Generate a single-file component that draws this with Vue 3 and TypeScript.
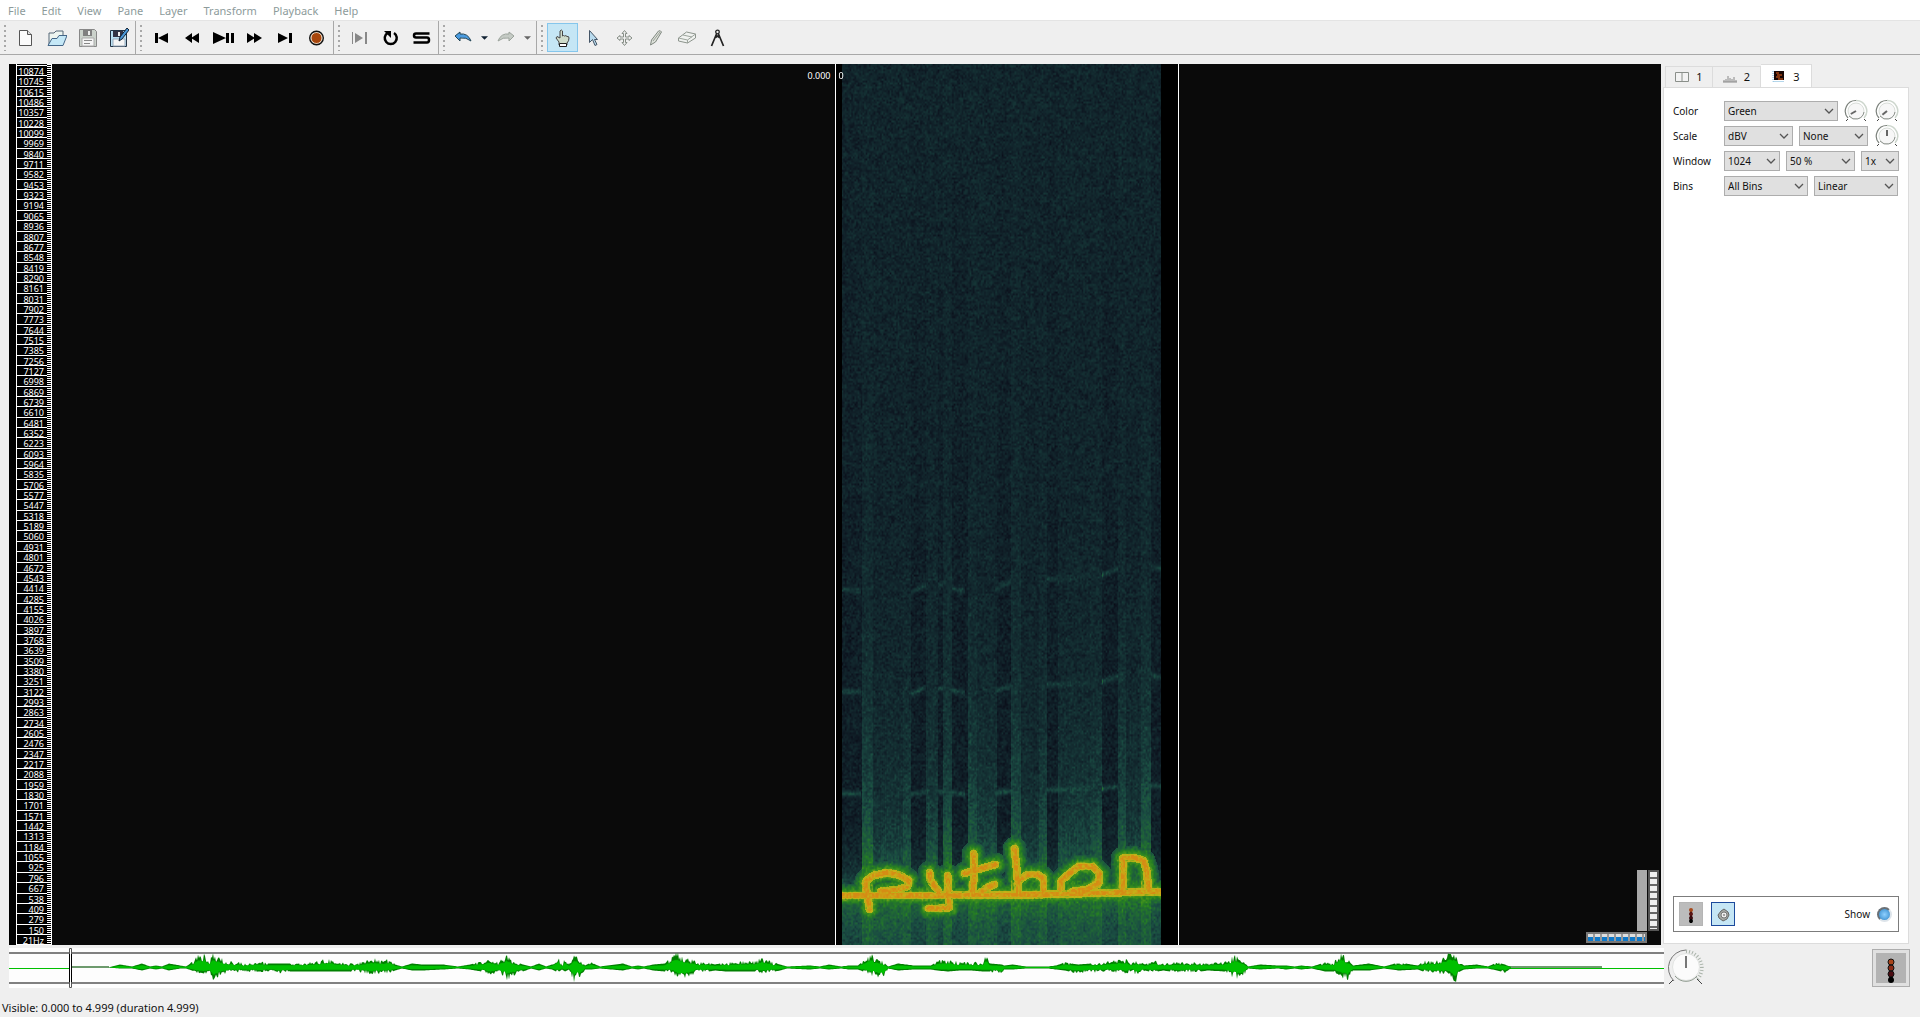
<script setup lang="ts">
import { onMounted, ref } from 'vue'

const menus = ['File', 'Edit', 'View', 'Pane', 'Layer', 'Transform', 'Playback', 'Help']

// Frequency scale: every sixth FFT bin, highest first.
const BIN_HZ = 22050 / 1024
const frequencies: string[] = Array.from({ length: 85 }, (_, i) => {
  const hz = Math.floor(BIN_HZ * (1 + 6 * (84 - i)))
  return i === 84 ? `${hz}Hz` : String(hz)
})

interface Choice { label: string; options: string[]; size: string }
interface SettingRow { name: string; choices: Choice[]; dials: number[] }
const settings: SettingRow[] = [
  { name: 'Color', choices: [{ label: 'Color', options: ['Green', 'Sunset', 'Ice'], size: 'w-xl' }], dials: [240, 230] },
  { name: 'Scale', choices: [
    { label: 'Scale', options: ['dBV', 'Linear', 'Meter'], size: 'w-md' },
    { label: 'Normalization', options: ['None', 'Column', 'Visible'], size: 'w-md' },
  ], dials: [0] },
  { name: 'Window', choices: [
    { label: 'Window size', options: ['1024', '2048', '4096'], size: 'w-sm' },
    { label: 'Window overlap', options: ['50 %', '75 %'], size: 'w-md' },
    { label: 'Oversampling', options: ['1x', '2x'], size: 'w-xs' },
  ], dials: [] },
  { name: 'Bins', choices: [
    { label: 'Bins', options: ['All Bins', 'Peak Bins'], size: 'w-lg' },
    { label: 'Bin scale', options: ['Linear', 'Log'], size: 'w-lg' },
  ], dials: [] },
]

function makeRandom(seed: number): () => number {
  let s = seed
  return () => {
    s = (s + 0x6d2b79f5) | 0
    let t = Math.imul(s ^ (s >>> 15), 1 | s)
    t = (t + Math.imul(t ^ (t >>> 7), 61 | t)) ^ t
    return ((t ^ (t >>> 14)) >>> 0) / 4294967296
  }
}

// Overview envelope: [x, peak above, peak below]
const envelope: [number, number, number][] = [
  [99, 0, 0], [111, 3, 1], [123, 1, 1], [133, 4, 3], [141, 1, 1], [147, 2, 2], [153, 1, 1], [160, 4, 3], [171, 2, 1],
  [177, 1, 1], [183, 5, 3], [188, 12, 6], [194, 14, 6], [201, 8, 6], [205, 14, 14], [211, 9, 8], [221, 6, 5], [236, 4, 4],
  [247, 6, 5], [259, 4, 4], [273, 4, 6], [281, 4, 4], [296, 5, 4], [309, 6, 4], [319, 9, 4], [331, 5, 4], [341, 4, 4],
  [353, 5, 5], [363, 9, 7], [375, 6, 6], [381, 9, 5], [386, 3, 3], [393, 1, 1], [403, 4, 3], [413, 3, 3], [434, 3, 2],
  [449, 1, 1], [461, 3, 2], [472, 6, 4], [481, 9, 8], [489, 5, 5], [498, 12, 12], [505, 6, 8], [514, 3, 4], [522, 1, 1],
  [530, 4, 3], [537, 1, 1], [543, 3, 2], [549, 11, 5], [553, 2, 2], [556, 9, 4], [560, 3, 2], [565, 11, 15], [572, 7, 10],
  [576, 2, 2], [582, 5, 2], [591, 1, 1], [614, 4, 3], [623, 1, 1], [629, 2, 2], [635, 1, 1], [644, 3, 3], [656, 4, 4],
  [664, 12, 5], [671, 14, 14], [677, 9, 12], [687, 6, 5], [694, 6, 5], [706, 3, 3], [717, 5, 4], [736, 6, 4], [746, 6, 4],
  [754, 10, 6], [761, 6, 5], [771, 3, 3], [778, 1, 1], [801, 2, 2], [811, 1, 1], [820, 3, 2], [832, 1, 1], [840, 2, 2],
  [849, 2, 2], [857, 9, 5], [861, 14, 8], [868, 8, 9], [874, 6, 14], [879, 1, 1], [889, 4, 3], [905, 2, 2], [922, 2, 2],
  [928, 6, 3], [939, 8, 4], [951, 5, 3], [962, 5, 3], [974, 5, 4], [977, 12, 4], [981, 4, 4], [993, 3, 8], [995, 2, 2],
  [1004, 3, 2], [1017, 1, 1], [1039, 1, 1], [1047, 2, 2], [1056, 5, 3], [1069, 3, 6], [1095, 5, 4], [1106, 7, 5],
  [1117, 8, 6], [1123, 4, 3], [1128, 7, 9], [1136, 3, 3], [1144, 7, 5], [1154, 4, 3], [1169, 5, 5], [1184, 5, 5],
  [1199, 4, 3], [1216, 6, 4], [1226, 12, 11], [1233, 8, 12], [1239, 1, 1], [1251, 3, 2], [1269, 2, 1], [1277, 2, 2],
  [1286, 1, 1], [1292, 2, 2], [1303, 1, 1], [1316, 5, 4], [1325, 5, 4], [1331, 15, 8], [1338, 9, 13], [1344, 2, 3],
  [1360, 4, 3], [1375, 1, 1], [1390, 5, 3], [1409, 2, 2], [1414, 6, 4], [1429, 7, 7], [1440, 13, 6], [1446, 14, 16],
  [1451, 5, 4], [1455, 2, 2], [1468, 3, 1], [1479, 1, 1], [1488, 5, 3], [1496, 3, 5], [1503, 0, 0],
]

function wavePath(scale: number, rough: number): string {
  const rnd = makeRandom(7)
  const top: string[] = []
  const bottom: string[] = []
  for (let i = 0; i < envelope.length - 1; i++) {
    const [x0, u0, d0] = envelope[i]
    const [x1, u1, d1] = envelope[i + 1]
    for (let x = x0; x < x1; x++) {
      const t = (x - x0) / (x1 - x0)
      const up = u0 + (u1 - u0) * t
      const down = d0 + (d1 - d0) * t
      const r = up > 4 ? 1.15 - rnd() * rough : 1
      const q = down > 4 ? 1.1 - rnd() * rough : 1
      top.push(`${x} ${(19.5 - Math.min(15, up * r) * scale).toFixed(1)}`)
      bottom.unshift(`${x} ${(19.5 + Math.min(15, down * q) * scale).toFixed(1)}`)
    }
  }
  return `M${top.join('L')}L${bottom.join('L')}Z`
}
const wavePeak = wavePath(1, 0.75)
const waveMean = wavePath(0.55, 0.4)

// Spectrogram
const SPEC_W = 319
const SPEC_H = 881
const canvas = ref<HTMLCanvasElement | null>(null)

type Pt = [number, number]
type Rgb = [number, number, number]
const traces: Pt[][] = [
  [[0, 831], [100, 831], [200, 830], [319, 827]],
  [[23, 824], [24, 816], [31, 811], [45, 808], [58, 811], [66, 816], [65, 822], [56, 825], [38, 827]],
  [[23, 820], [25, 831], [27, 845]],
  [[87, 808], [88, 816], [96, 827]],
  [[105, 811], [106, 826], [107, 843], [97, 844], [86, 844]],
  [[131, 789], [132, 806], [130, 828]],
  [[122, 809], [135, 805], [153, 800]],
  [[138, 828], [145, 823], [152, 820]],
  [[172, 784], [174, 803], [176, 828]],
  [[176, 816], [185, 810], [195, 810], [201, 814], [201, 826]],
  [[218, 826], [219, 816], [228, 808], [236, 802], [250, 802], [257, 809], [256, 819], [245, 825], [230, 827]],
  [[280, 828], [281, 811], [280, 794], [291, 793], [301, 796], [304, 806], [306, 824]],
]

// Columns with leakage: [from, to, strength]
const bands: [number, number, number][] = [
  [20, 31, 1], [31, 61, 0.5], [61, 69, 0.75], [84, 96, 0.72], [101, 110, 0.95], [126, 135, 0.95], [135, 155, 0.62],
  [169, 179, 1], [179, 197, 0.45], [197, 205, 0.8], [216, 248, 0.6], [248, 260, 0.76], [276, 284, 0.95], [284, 300, 0.5],
  [299, 309, 1],
]
const overtone: [number, number, number, number][] = [
  [0, 18, 0, 1], [68, 86, 2, -4], [96, 101, -3, -3], [110, 122, -1, 1], [153, 170, 0, -6], [203, 228, -7, -8],
  [228, 260, -8, -10], [260, 276, -10, -15], [309, 319, -16, -14],
]

const stops: [number, number, number][] = [
  [3, 4, 9], [12, 19, 30], [17, 36, 43], [21, 53, 54], [26, 76, 66], [31, 99, 56],
  [38, 127, 34], [74, 150, 28], [176, 176, 24], [200, 176, 24], [213, 140, 20],
]

function colour(v: number): Rgb {
  const c = Math.max(0, Math.min(0.999, v)) * 10
  const i = Math.floor(c)
  const f = c - i
  const a = stops[i]
  const b = stops[i + 1]
  return [a[0] + (b[0] - a[0]) * f, a[1] + (b[1] - a[1]) * f, a[2] + (b[2] - a[2]) * f]
}

function distance(px: number, py: number, a: Pt, b: Pt): number {
  const dx = b[0] - a[0]
  const dy = b[1] - a[1]
  const t = Math.max(0, Math.min(1, ((px - a[0]) * dx + (py - a[1]) * dy) / (dx * dx + dy * dy)))
  return Math.hypot(px - a[0] - t * dx, py - a[1] - t * dy)
}

onMounted(() => {
  const ctx = canvas.value?.getContext('2d')
  if (!ctx) return
  const rnd = makeRandom(1024)
  const stepX = 1.6
  const stepY = 1.9
  const stride = Math.ceil(SPEC_W / stepX) + 2
  const noise = new Float32Array(stride * (Math.ceil(SPEC_H / stepY) + 2))
  for (let i = 0; i < noise.length; i++) noise[i] = rnd() + rnd() - 1
  const column = Array.from({ length: SPEC_W }, () => rnd() - 0.5)
  const img = ctx.createImageData(SPEC_W, SPEC_H)

  for (let x = 0; x < SPEC_W; x++) {
    let band = 0
    for (const [from, to, s] of bands) if (x >= from && x < to) band = Math.max(band, s)
    if (band) band += column[x] * 0.14
    const gx = Math.floor(x / stepX)
    const fx = x / stepX - gx
    for (let y = 0; y < SPEC_H; y++) {
      const above = 831 - x / 90 - y
      const gy = Math.floor(y / stepY)
      const fy = y / stepY - gy
      const k = gy * stride + gx
      const upper = noise[k] * (1 - fx) + noise[k + 1] * fx
      const lower = noise[k + stride] * (1 - fx) + noise[k + stride + 1] * fx
      const grain = upper * (1 - fy) + lower * fy
      let v = 0.2 - 0.035 * Math.min(1, y / 600)
      if (above > 0) {
        v += band * (0.24 * Math.exp(-above / 150) + 0.08 * Math.exp(-above / 400) + 0.16 * Math.exp(-above / 45))
        v += 0.38 * Math.exp(-above / 20) * (1 - band * 0.5)
      } else {
        v += 0.2 + band * 0.1 + 0.24 * Math.exp(above / 16)
      }
      if (band < 0.7) {
        for (let h = 0; h < 4; h++) {
          const spread = [0.5, 1, 1.45, 1.8][h]
          const gain = [0.19, 0.17, 0.14, 0.04][h] * (band ? 0.4 : 1)
          for (const [x0, x1, d0, d1] of overtone) {
            if (x < x0 || x > x1) continue
            const yy = 729 - h * 102 + (d0 + ((d1 - d0) * (x - x0)) / (x1 - x0)) * spread
            v += gain * Math.exp(-(((y - yy) / 3) ** 2))
          }
        }
      }
      v += grain * 0.12
      if (y > 760) {
        let d = 99
        for (const t of traces) for (let i = 1; i < t.length; i++) d = Math.min(d, distance(x, y, t[i - 1], t[i]))
        if (d < 4) v = (d < 2.2 ? 0.97 : 0.84) + grain * 0.12
        else if (d < 12) v = Math.max(v, 0.7 - (d - 4) * 0.035 + grain * 0.1)
      }
      const [r, g, b] = colour(v)
      const o = (y * SPEC_W + x) * 4
      img.data[o] = r
      img.data[o + 1] = g
      img.data[o + 2] = b
      img.data[o + 3] = 255
    }
  }
  ctx.putImageData(img, 0, 0)
})
</script>

<template>
  <div class="app">
    <nav class="menubar">
      <a v-for="m in menus" :key="m" href="#">{{ m }}</a>
    </nav>

    <header class="toolbar">
      <div class="group">
        <i class="grip"></i>
        <button aria-label="New">
          <svg viewBox="0 0 20 20"><path d="M3.500 2.500h8l4 4v11h-12z" fill="#fbfbfb" stroke="#555" /><path d="M11.500 2.500v4h4" fill="#ddd" stroke="#555" /></svg>
        </button>
        <button aria-label="Open">
          <svg viewBox="0 0 20 20"><path d="M2 17V5h5l2-2h7v5" fill="#eef5f0" stroke="#567" /><path d="M1 17.500l4-7h5l2-3h8l-4 10z" fill="#c5e8f7" stroke="#468" /></svg>
        </button>
        <button aria-label="Save">
          <svg viewBox="0 0 20 20"><path d="M1.500 1.500h15l2 2v15h-17z" fill="#cbd2cb" stroke="#888" /><path d="M5 2h9v6H5z" fill="#808080" /><path d="M10 3h2v4h-2z" fill="#eee" /><path d="M4 10h12v8H4z" fill="#f5f5f5" stroke="#aaa" /><path d="M6 12.500h8M6 15.500h6" stroke="#888" /></svg>
        </button>
        <button aria-label="Save As">
          <svg viewBox="0 0 20 20"><path d="M1.500 2.500h16v16h-16z" fill="#b9dff2" stroke="#234" /><path d="M4 3h10v6H4z" fill="#334" /><path d="M9 4h2v4H9z" fill="#eee" /><path d="M4 11h12v7H4z" fill="#f5f5f5" stroke="#9ab" /><path d="M10 13l1-4 7-9 2 2-7 9z" fill="#4a97d8" stroke="#123" /></svg>
        </button>
      </div>
      <div class="group">
        <i class="grip"></i>
        <button aria-label="Rewind to Start"><svg viewBox="0 0 20 20"><path d="M3 5h3v10H3zM16 5v10L6 10z" /></svg></button>
        <button aria-label="Rewind"><svg viewBox="0 0 20 20"><path d="M9 5v10l-7-5zM16 5v10l-8-5z" /></svg></button>
        <button aria-label="Play or Pause"><svg class="wide" viewBox="0 0 24 20"><path d="M1 4l13 6-13 6zM14 5h3v10h-3zM19 5h3v10h-3z" /></svg></button>
        <button aria-label="Fast Forward"><svg viewBox="0 0 20 20"><path d="M2 5v10l8-5zM9 5v10l8-5z" /></svg></button>
        <button aria-label="Fast Forward to End"><svg viewBox="0 0 20 20"><path d="M2 5v10l10-5zM13 5h3v10h-3z" /></svg></button>
        <button aria-label="Record"><svg viewBox="0 0 20 20"><circle cx="9.500" cy="10" r="5.500" fill="#a8460c" stroke="#f3dcc4" /><circle cx="9.500" cy="10" r="6.800" fill="none" stroke="#111" stroke-width="1.400" /></svg></button>
      </div>
      <div class="group">
        <i class="grip"></i>
        <button aria-label="Play Selection"><svg viewBox="0 0 20 20" fill="#888"><path d="M2 4h1v12H2zM15 4h2v12h-2zM5 5l8 5-8 5z" /></svg></button>
        <button aria-label="Loop"><svg viewBox="0 0 20 20"><path d="M13 5A6 6 0 1 1 6.500 5" fill="none" stroke="#000" stroke-width="2.500" /><path d="M3 3h7v7z" /></svg></button>
        <button aria-label="Solo"><svg viewBox="0 0 20 20"><path d="M17.500 5.500H4q-2 0-2 2t2 2h11q2 0 2 2.500t-2 2.500H1.500" fill="none" stroke="#000" stroke-width="2.500" /></svg></button>
      </div>
      <div class="group">
        <i class="grip"></i>
        <button class="split" aria-label="Undo">
          <svg viewBox="0 0 20 20"><path d="M2 8l5-4v2q8-1 11 7-5-4-11-3v3z" fill="#4a9be0" stroke="#245" /></svg>
          <svg class="caret" viewBox="0 0 8 4"><path d="M0 0h8L4 4z" fill="#123" /></svg>
        </button>
        <button class="split" aria-label="Redo">
          <svg viewBox="0 0 20 20"><path d="M18 8l-5-4v2Q5 5 2 13q5-4 11-3v3z" fill="#c4cac4" stroke="#9ba39b" /></svg>
          <svg class="caret" viewBox="0 0 8 4"><path d="M0 0h8L4 4z" fill="#666" /></svg>
        </button>
      </div>
      <div class="group last">
        <i class="grip"></i>
        <button class="on" aria-label="Navigate"><svg viewBox="0 0 20 20"><path d="M6 17v-3l-3-4 1-1.500 3 1.500V3q1.500-2 2.500 0v5q1-1 2 0 1.500-1 2.500.500 2-.500 2 1.500 0 3-2 5v2z" fill="#cfdccb" stroke="#444" /><path d="M6.500 15.500h7v3h-7z" fill="#fff" stroke="#222" /></svg></button>
        <button aria-label="Select"><svg viewBox="0 0 20 20"><path d="M5.500 2.500v12l3-3 2.500 6 2-1-2.500-5h3z" fill="#b9dbee" stroke="#456" /></svg></button>
        <button aria-label="Move"><svg viewBox="0 0 20 20"><path d="M9.500 2.500l2.500 3h-1.500V9H14V7.500l3 2.500-3 2.500V11h-3.500v3.500H12l-2.500 3-2.500-3h1.500V11H5v1.500L2 10l3-2.500V9h3.500V5.500H7z" fill="#eee" stroke="#858d85" /></svg></button>
        <button aria-label="Draw"><svg viewBox="0 0 20 20"><path d="M4.500 17l1-5 7-9q2-1 3 1l-6 10z" fill="#dde1da" stroke="#808880" /><path d="M7 13l7-9" stroke="#9a9f98" /></svg></button>
        <button aria-label="Erase"><svg viewBox="0 0 20 20"><path d="M1.500 10l8-6 9 2v4l-8 5-9-2z" fill="#f0f2f0" stroke="#8d958d" /><path d="M1.500 10l9 2 8-6M10.500 12v3M6 7l9 2" fill="none" stroke="#9da59d" /></svg></button>
        <button aria-label="Measure"><svg viewBox="0 0 20 20"><circle cx="9.500" cy="4" r="1.800" fill="none" stroke="#222" stroke-width="1.300" /><path d="M8.500 6L3.500 18M10.500 6l5 12M7.500 9.500l2-1.500 2 1.500" fill="none" stroke="#222" stroke-width="1.700" /></svg></button>
      </div>
    </header>

    <main class="body">
      <section class="pane">
        <div class="before">
          <div class="ruler">
            <div class="labels">
              <span v-for="f in frequencies" :key="f">{{ f }}</span>
            </div>
            <div class="ticks"></div>
          </div>
          <span class="time">0.000</span>
        </div>
        <div class="after">
          <div class="clip">
            <canvas ref="canvas" class="spectrum" :width="SPEC_W" :height="SPEC_H"></canvas>
            <span class="frame">0</span>
          </div>
        </div>
        <div class="wheels">
          <i class="vscroll"></i>
          <i class="vwheel"></i>
          <i class="hwheel"></i>
        </div>
      </section>

      <aside class="side">
        <div class="tabs" role="tablist">
          <button role="tab"><svg viewBox="0 0 14 11"><path d="M.500.500h13v9H.500zM7 .500v9" fill="#f3f3f3" stroke="#8a8f8a" /></svg>1</button>
          <button role="tab"><svg viewBox="0 0 14 11"><path d="M1 10V8M3 10V7M5 10V4M7 10V6M9 10V7M11 10V5M13 10V8M0 10h14" fill="none" stroke="#888" /></svg>2</button>
          <button role="tab" class="current"><svg viewBox="0 0 14 11"><path d="M2 0h10v9H2z" fill="#180604" /><path d="M4 2h3M5 4h5M4 6h4M6 8h5" stroke="#e8601a" /><path d="M1 0v10.500h11" fill="none" stroke="#6aaed8" stroke-dasharray="1 1" /></svg>3</button>
        </div>
        <div class="panel">
          <form class="settings">
            <div v-for="row in settings" :key="row.name" class="row">
              <label :for="`set-${row.name}-0`">{{ row.name }}</label>
              <div class="fields">
                <span v-for="(c, i) in row.choices" :key="c.label" :class="['pick', c.size]">
                  <select :id="`set-${row.name}-${i}`" :aria-label="c.label">
                    <option v-for="o in c.options" :key="o">{{ o }}</option>
                  </select>
                  <svg viewBox="0 0 10 6"><path d="M1 1l4 4 4-4" fill="none" stroke="#555" stroke-width="1.300" /></svg>
                </span>
                <svg v-for="(a, i) in row.dials" :key="i" class="dial" :class="{ end: i === row.dials.length - 1 }" viewBox="0 0 24 24">
                  <path d="M4 19a10.500 10.500 0 0 1 8-17.500" fill="none" stroke="#7c827c" stroke-width="1.200" />
                  <path d="M12 1.500a10.500 10.500 0 0 1 8 17.500" fill="none" stroke="#cdd6cd" stroke-width="1.500" />
                  <circle cx="12" cy="12" r="8" fill="#f7f7f7" stroke="#d9ded9" />
                  <path d="M5 17a8.500 8.500 0 0 0 15-4" fill="none" stroke="#8b908b" />
                  <path d="M2 22l2-2M22 22l-2-2" stroke="#444" />
                  <path d="M12 12V6" stroke="#666" stroke-width="2" :transform="`rotate(${a} 12 12)`" />
                </svg>
              </div>
            </div>
          </form>
          <div class="playbox">
            <button class="tool" aria-label="Playback level">
              <svg viewBox="0 0 22 22"><path d="M11 6v14" stroke="#111" stroke-width="2" /><circle cx="11" cy="7" r="2" fill="#a8481a" /><circle cx="11" cy="11" r="2" fill="#5c1414" /><circle cx="11" cy="15" r="2" fill="#3c0c10" /><circle cx="11" cy="18" r="2" fill="#000" /></svg>
            </button>
            <button class="tool active" aria-label="Play audio">
              <svg viewBox="0 0 22 22"><path d="M6 12l3-4 3-2 4 3 1 3-2 4-4 2-4-3z" fill="#a5a9a5" stroke="#666" /><circle cx="12" cy="12" r="3" fill="#eee" stroke="#777" /><circle cx="12" cy="12" r="1" fill="#888" /></svg>
            </button>
            <span class="show">Show</span>
            <button class="led" aria-label="Show layer"></button>
          </div>
        </div>
      </aside>
    </main>

    <section class="overview">
      <div class="strip">
        <svg viewBox="0 0 1655 40" preserveAspectRatio="none">
          <path d="M0 4h1655v2H0zM0 34h1655v2H0z" fill="#808080" />
          <path d="M60 19h40M1500 19h93" stroke="#6d9a6d" stroke-width="2" />
          <path d="M0 20.500h62M1500 20.500h155" stroke="#00c000" />
          <path :d="wavePeak" fill="#008000" />
          <path :d="waveMean" fill="#00c000" />
          <path d="M60.500.500h2v39h-2z" fill="#fff" stroke="#555" />
          <path d="M60.500 6v28M62.500 6v28" stroke="#000" />
        </svg>
      </div>
      <div class="controls">
        <svg class="speed" viewBox="0 0 38 40">
          <path d="M7 33A18 18 0 0 1 19 2" fill="none" stroke="#777" />
          <path d="M19 3.500a16.500 16.500 0 0 1 11 28" fill="none" stroke="#a9b3a9" stroke-width="4" stroke-dasharray="1 2" />
          <circle cx="19" cy="19" r="13.500" fill="#fbfbfb" stroke="#e2e4e2" />
          <path d="M8 28a14 14 0 0 0 22 0" fill="none" stroke="#8f9a8f" />
          <path d="M19 20V8" stroke="#777" stroke-width="2" />
          <path d="M2 36l4-4M35 36l-5-5" stroke="#444" />
        </svg>
        <button class="master" aria-label="Master level">
          <svg viewBox="0 0 30 30"><path d="M15 8v20" stroke="#222" stroke-width="4" /><circle cx="15" cy="9" r="3" fill="#a8441a" stroke="#111" /><circle cx="15" cy="15" r="3" fill="#8a2a14" stroke="#111" /><circle cx="15" cy="21" r="3" fill="#4c0c12" stroke="#111" /><circle cx="15" cy="27" r="3" fill="#000" /></svg>
        </button>
      </div>
    </section>

    <footer class="status">Visible: 0.000 to 4.999 (duration 4.999)</footer>
  </div>
</template>

<style>
body {
  margin: 0;
  background: #efefef;
}
</style>

<style scoped>
.app {
  display: flex;
  flex-direction: column;
  min-height: 100vh;
  background: #efefef;
  color: #111;
  font: 11px/16px "Noto Sans", "Open Sans", sans-serif;
}
.app * {
  box-sizing: border-box;
}
button {
  padding: 0;
  border: 0;
  background: none;
  font: inherit;
  color: inherit;
}
svg {
  display: block;
}
.menubar {
  display: flex;
  gap: 16px;
  height: 20px;
  padding: 3px 8px 0;
  background: #fff;
}
.menubar a {
  color: #8d9b9b;
  text-decoration: none;
}
.toolbar {
  display: flex;
  height: 35px;
  border-top: 1px solid #e4e4e4;
  border-bottom: 1px solid #a8a8a8;
}
.group {
  display: flex;
  align-items: center;
  padding-right: 1px;
  border-right: 1px solid #a8a8a8;
}
.group.last {
  border-right: 0;
}
.grip {
  width: 2px;
  height: 26px;
  margin: 0 4px;
  background: repeating-linear-gradient(#a8a8a8 0 2px, transparent 2px 5px);
}
.group button {
  display: flex;
  align-items: center;
  justify-content: center;
  width: 31px;
  height: 29px;
}
.group button svg {
  width: 20px;
  height: 20px;
}
.group button svg.wide {
  width: 24px;
}
.group button.split {
  width: 43px;
  gap: 8px;
}
.group button.split .caret {
  width: 7px;
  height: 4px;
}
.group button.on {
  border: 1px solid #85c6ec;
  background: #c5e6f5;
}
.body {
  display: flex;
  flex: 1;
  padding: 9px 11px 0 9px;
}
.pane {
  position: relative;
  display: flex;
  flex: 1;
  background: #0a0a0a;
  color: #fff;
  font-size: 9px;
  line-height: 10px;
}
.before {
  display: flex;
  flex: 1;
  justify-content: space-between;
  border-right: 1px solid #fff;
}
.after {
  display: flex;
  flex: 1;
}
.ruler {
  display: flex;
  padding-left: 7px;
  background: #000;
}
.labels {
  display: flex;
  flex-direction: column;
  width: 31px;
  padding-top: 1px;
  border-left: 1px solid #fff;
  line-height: 12px;
}
.labels span {
  flex: 1 1 0;
  min-height: 0;
  padding-right: 3px;
  border-bottom: 1px solid #fff;
  text-align: right;
}
.labels span:first-child {
  border-top: 1px solid #fff;
}
.ticks {
  width: 5px;
  border-right: 1px solid #fff;
  background: repeating-linear-gradient(#fff 0 1px, #000 1px 2px);
}
.time {
  padding: 7px 4px 0 0;
}
.clip {
  position: relative;
  display: flex;
  padding: 0 17px 0 6px;
  border-right: 1px solid #fff;
  background: #000;
}
.spectrum {
  display: block;
  width: 319px;
}
.frame {
  position: absolute;
  top: 7px;
  left: 3px;
}
.wheels {
  position: absolute;
  right: 2px;
  bottom: 2px;
  display: grid;
  grid-template-columns: 50px 10px 11px;
  grid-template-rows: 61px 11px;
  column-gap: 1px;
  row-gap: 1px;
}
.vscroll {
  grid-column: 2;
  background: #a9a9a9;
}
.vwheel {
  grid-column: 3;
  border: 2px solid #555;
  background: repeating-linear-gradient(#eee 0 5px, #666 5px 7px);
}
.hwheel {
  grid-column: 1 / 3;
  grid-row: 2;
  border: 2px solid #777;
  background: repeating-linear-gradient(90deg, transparent 0 5px, #999 5px 7px), linear-gradient(#ddd 40%, #0f78c8 40%);
}
.side {
  display: flex;
  flex-direction: column;
  width: 246px;
  margin-left: 2px;
  font-size: 10px;
}
.tabs {
  display: flex;
  align-items: flex-end;
  height: 23px;
  padding-left: 2px;
  font-size: 11px;
}
.tabs button {
  display: flex;
  align-items: center;
  justify-content: center;
  gap: 7px;
  width: 48px;
  height: 21px;
  border: 1px solid #dcdcdc;
  border-bottom: 0;
}
.tabs button + button {
  border-left: 0;
}
.tabs svg {
  width: 14px;
  height: 11px;
}
.tabs .current {
  width: 51px;
  height: 24px;
  margin-bottom: -1px;
  background: #fff;
}
.panel {
  display: flex;
  flex: 1;
  flex-direction: column;
  justify-content: space-between;
  margin-bottom: 1px;
  padding: 10px 9px 11px;
  border: 1px solid #dcdcdc;
  background: #fff;
}
.row {
  display: flex;
  align-items: center;
  height: 25px;
}
.row label {
  width: 51px;
}
.fields {
  display: flex;
  flex: 1;
  align-items: center;
  gap: 6px;
}
.pick {
  position: relative;
}
.pick select {
  display: block;
  width: 100%;
  height: 20px;
  padding: 0 3px;
  appearance: none;
  border: 1px solid #adadad;
  border-radius: 0;
  background: #e0e0e0;
  color: #111;
  font: inherit;
}
.pick svg {
  position: absolute;
  top: 7px;
  right: 4px;
  width: 10px;
  height: 6px;
  pointer-events: none;
}
.w-xl { width: 114px; }
.w-lg { width: 84px; }
.w-md { width: 69px; }
.w-sm { width: 56px; }
.w-xs { width: 38px; }
.dial {
  width: 24px;
  height: 24px;
}
.dial.end {
  margin-left: auto;
}
.playbox {
  display: flex;
  align-items: center;
  height: 36px;
  padding: 0 6px 0 5px;
  border: 1px solid #7c7c7c;
}
.tool {
  width: 24px;
  height: 24px;
  margin-right: 8px;
  border: 1px solid #b5b5b5;
  background: #bcbcbc;
}
.tool.active {
  border-color: #1c4a9c;
  background: #c5e6f5;
}
.show {
  margin-left: auto;
}
.led {
  width: 15px;
  height: 15px;
  margin-left: 7px;
  border: 2px solid #6a7076;
  border-right-color: #dde4ea;
  border-bottom-color: #dde4ea;
  border-radius: 50%;
  background: radial-gradient(#8fd0ff, #2f86c8);
}
.overview {
  display: flex;
  height: 43px;
  padding: 3px 10px 0 9px;
}
.strip {
  flex: 1;
  height: 40px;
  background: #fdfdfd;
}
.strip svg {
  width: 100%;
  height: 40px;
}
.controls {
  display: flex;
  align-items: center;
  justify-content: space-between;
  width: 246px;
  padding-left: 3px;
}
.speed {
  width: 38px;
  height: 40px;
}
.master {
  padding: 3px;
  border: 1px solid #adadad;
  background: #e0e0e0;
}
.master svg {
  width: 30px;
  height: 30px;
  background: #b3b3b3;
}
.status {
  height: 29px;
  padding: 12px 2px 0;
}
</style>
